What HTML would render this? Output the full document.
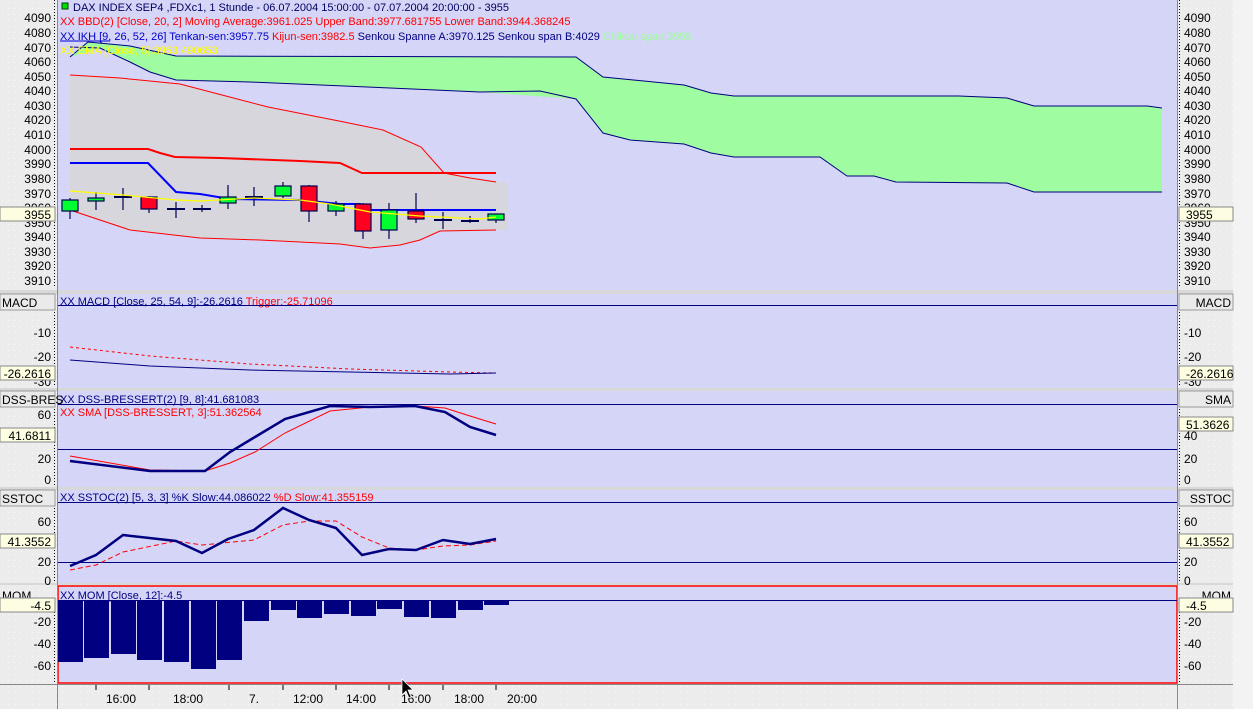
<!DOCTYPE html>
<html><head><meta charset="utf-8"><style>
html,body{margin:0;padding:0;background:#ececec;}
svg{display:block;font-family:"Liberation Sans",sans-serif;}
</style></head><body>
<svg width="1253" height="709" viewBox="0 0 1253 709" xmlns="http://www.w3.org/2000/svg">
<defs>
<pattern id="dots" width="8" height="8" patternUnits="userSpaceOnUse"><rect width="8" height="8" fill="#d5d5f7"/><rect x="3" y="3" width="1" height="1" fill="#e6e6fa"/></pattern>
<pattern id="gdots" width="6" height="6" patternUnits="userSpaceOnUse"><rect width="6" height="6" fill="#ececec"/><rect x="2" y="2" width="1" height="1" fill="#fafafa"/></pattern>
</defs>
<rect width="1253" height="709" fill="url(#gdots)"/>
<rect x="1233" y="0" width="20" height="709" fill="#f3f3f3"/>
<rect x="58" y="0" width="1119" height="290" fill="url(#dots)"/>
<rect x="58" y="294" width="1119" height="94" fill="url(#dots)"/>
<rect x="58" y="391" width="1119" height="96" fill="url(#dots)"/>
<rect x="58" y="490" width="1119" height="94" fill="url(#dots)"/>
<rect x="58" y="586" width="1119" height="97" fill="url(#dots)" stroke="#ff0000" stroke-width="1.5"/>
<g fill="#d8d8d8"><rect x="0" y="290" width="1233" height="4"/><rect x="0" y="388" width="1233" height="3"/><rect x="0" y="487" width="1233" height="3"/><rect x="0" y="583" width="1233" height="2"/></g>
<line x1="57.5" y1="0" x2="57.5" y2="709" stroke="#888"/>
<line x1="1177.5" y1="0" x2="1177.5" y2="709" stroke="#888"/>
<line x1="0" y1="684.5" x2="1233" y2="684.5" stroke="#888"/>
<g stroke="#000" stroke-dasharray="1,2"><line x1="54.5" y1="0" x2="54.5" y2="288"/><line x1="1179.5" y1="0" x2="1179.5" y2="288"/><line x1="54.5" y1="312" x2="54.5" y2="386"/><line x1="54.5" y1="409" x2="54.5" y2="486"/><line x1="54.5" y1="508" x2="54.5" y2="582"/><line x1="54.5" y1="600" x2="54.5" y2="682"/><line x1="1179.5" y1="312" x2="1179.5" y2="386"/><line x1="1179.5" y1="409" x2="1179.5" y2="486"/><line x1="1179.5" y1="508" x2="1179.5" y2="582"/><line x1="1179.5" y1="600" x2="1179.5" y2="682"/></g>

<polygon fill="#a0fca0" points="70,57 88,42 130,46 176,56 576,57 603,77 684,85 711,93 734,96 959,96 1007,98 1034,106 1147,106 1162,108 1162,192 1034,192 1007,183 896,182 874,176 847,176 820,157 734,157 711,153 684,144 630,140 603,133 576,99 480,92 390,88 250,82 176,80 150,72 130,62 100,48 70,57"/>
<polyline fill="none" stroke="#000080" stroke-width="1" points="70,57 88,42 130,46 176,56 576,57 603,77 684,85 711,93 734,96 959,96 1007,98 1034,106 1147,106 1162,108"/>
<polyline fill="none" stroke="#000080" stroke-width="1" points="70,47 100,48 130,62 150,72 176,80 250,82 390,88 480,92 540,91 576,99 603,133 630,140 684,144 711,153 734,157 820,157 847,176 874,176 896,182 1007,183 1034,192 1162,192"/>
<polygon fill="#d6d6dc" points="70,75 120,78 180,84 222,95 268,107 344,122 383,130 421,147 444,173 496,181 508,183 508,230 496,230 440,231 420,240 400,245 370,248 340,244 260,240 200,238 130,230 70,210"/>
<polyline fill="none" stroke="#ff0000" points="70,75 120,78 180,84 222,95 268,107 344,122 383,130 421,147 444,173 470,178 496,182"/>
<polyline fill="none" stroke="#ff0000" points="62,205 70,210 130,230 200,238 260,240 340,244 370,248 400,245 420,240 440,231 496,230"/>
<polyline fill="none" stroke="#ff0000" stroke-width="2" points="70,149 148,149 160,153 175,157 220,158 300,161 340,163 362,173 496,173"/>
<polyline fill="none" stroke="#0000ff" stroke-width="2" points="70,163 148,163 176,192 200,194 230,199 300,200 340,204 360,204 362,210 496,210"/>
<g stroke="#000050" stroke-width="1.2">
<line x1="70" y1="198" x2="70" y2="219"/><rect x="62" y="200" width="16" height="11" fill="#00ff30"/>
<line x1="96" y1="192" x2="96" y2="210"/><rect x="88" y="198" width="16" height="3" fill="#00ff30"/>
<line x1="123" y1="188" x2="123" y2="210"/><line x1="114" y1="197" x2="132" y2="197" stroke-width="2"/>
<line x1="149" y1="196" x2="149" y2="213"/><rect x="141" y="197" width="16" height="12" fill="#ff0020"/>
<line x1="176" y1="202" x2="176" y2="218"/><line x1="167" y1="209" x2="185" y2="209" stroke-width="2"/>
<line x1="202" y1="205" x2="202" y2="212"/><line x1="193" y1="209" x2="211" y2="209" stroke-width="2"/>
<line x1="228" y1="185" x2="228" y2="209"/><rect x="220" y="197" width="16" height="6" fill="#00ff30"/>
<line x1="254" y1="187" x2="254" y2="206"/><line x1="245" y1="197" x2="263" y2="197" stroke-width="2"/>
<line x1="283" y1="182" x2="283" y2="198"/><rect x="275" y="186" width="16" height="10" fill="#00ff30"/>
<line x1="309" y1="185" x2="309" y2="222"/><rect x="301" y="186" width="16" height="25" fill="#ff0020"/>
<line x1="336" y1="201" x2="336" y2="216"/><rect x="328" y="204" width="16" height="7" fill="#00ff30"/>
<line x1="363" y1="203" x2="363" y2="239"/><rect x="355" y="204" width="16" height="27" fill="#ff0020"/>
<line x1="389" y1="203" x2="389" y2="239"/><rect x="381" y="210" width="16" height="20" fill="#00ff30"/>
<line x1="416" y1="193" x2="416" y2="223"/><rect x="408" y="211" width="16" height="8" fill="#ff0020"/>
<line x1="443" y1="212" x2="443" y2="229"/><line x1="434" y1="220" x2="452" y2="220" stroke-width="2"/>
<line x1="470" y1="216" x2="470" y2="223"/><line x1="461" y1="221" x2="479" y2="221" stroke-width="2"/>
<line x1="496" y1="214" x2="496" y2="223"/><rect x="488" y="214" width="16" height="6" fill="#00ff30"/>
</g>
<polyline fill="none" stroke="#ffff00" stroke-width="1.2" points="70,191 123,195 176,200 200,201 254,198 300,200 330,204 370,212 420,216 480,219 496,217"/>

<g font-size="11">
<rect x="62" y="3" width="6" height="6" fill="#00e000" stroke="#004000"/>
<text x="73" y="11" fill="#000060">DAX INDEX SEP4  ,FDXc1, 1 Stunde - 06.07.2004 15:00:00 - 07.07.2004 20:00:00 - 3955</text>
<text x="60" y="25" fill="#ff0000">XX BBD(2) [Close, 20, 2] Moving Average:3961.025 Upper Band:3977.681755 Lower Band:3944.368245</text>
<text x="60" y="40" fill="#0000cc">XX IKH [9, 26, 52, 26] Tenkan-sen:3957.75 <tspan fill="#ff0000">Kijun-sen:3982.5</tspan> <tspan fill="#000080">Senkou Spanne A:3970.125 Senkou span B:4029</tspan> <tspan fill="#a0fca0">Chikou span:3955</tspan></text>
<text x="60" y="54" fill="#ffff00">XX EMA [Close, 5]:3953.490653</text>
<line x1="60" y1="41" x2="110" y2="41" stroke="#0000cc"/>
<text x="60" y="305" fill="#000080">XX MACD [Close, 25, 54, 9]:-26.2616 <tspan fill="#ff0000">Trigger:-25.71096</tspan></text>
<text x="60" y="403" fill="#000080">XX DSS-BRESSERT(2) [9, 8]:41.681083</text>
<text x="60" y="416" fill="#ff0000">XX SMA [DSS-BRESSERT, 3]:51.362564</text>
<text x="60" y="501" fill="#000080">XX SSTOC(2) [5, 3, 3] %K Slow:44.086022 <tspan fill="#ff0000">%D Slow:41.355159</tspan></text>
<text x="60" y="599" fill="#000080">XX MOM [Close, 12]:-4.5</text>
</g>
<g stroke="#000080"><line x1="58" y1="305.5" x2="1177" y2="305.5"/><line x1="58" y1="404.5" x2="1177" y2="404.5"/><line x1="58" y1="449.5" x2="1177" y2="449.5"/><line x1="58" y1="502.5" x2="1177" y2="502.5"/><line x1="58" y1="562.5" x2="1177" y2="562.5"/><line x1="58" y1="600.5" x2="1177" y2="600.5"/></g>

<polyline fill="none" stroke="#ff0000" stroke-dasharray="3,3" points="70,347 150,356 250,364 350,369 450,372 496,373"/>
<polyline fill="none" stroke="#000080" points="70,360 150,366 250,370 350,372 450,374 496,373"/>
<polyline fill="none" stroke="#ff0000" points="70,456 150,470 205,471 230,463 255,452 285,433 330,411 370,407 415,406 445,408 470,416 496,424"/>
<polyline fill="none" stroke="#000080" stroke-width="2.5" points="70,461 150,471 205,471 230,452 255,437 285,419 330,406 370,407 415,406 445,412 470,427 496,435"/>
<polyline fill="none" stroke="#ff0000" stroke-dasharray="5,3" points="70,570 96,565 123,552 176,541 202,545 254,540 283,525 309,521 336,521 362,537 389,548 416,550 443,546 470,545 496,541"/>
<polyline fill="none" stroke="#000080" stroke-width="2.5" points="70,566 96,555 123,535 176,541 202,553 228,539 254,530 283,508 309,520 336,528 362,555 389,549 416,550 443,540 470,544 496,539"/>
<g fill="#000080">
<rect x="58" y="601" width="25" height="61"/><rect x="84" y="601" width="25" height="57"/><rect x="111" y="601" width="25" height="53"/><rect x="137" y="601" width="25" height="59"/><rect x="164" y="601" width="25" height="61"/><rect x="191" y="601" width="25" height="68"/><rect x="217" y="601" width="25" height="59"/><rect x="244" y="601" width="25" height="20"/><rect x="271" y="601" width="25" height="9"/><rect x="297" y="601" width="25" height="17"/><rect x="324" y="601" width="25" height="13"/><rect x="351" y="601" width="25" height="15"/><rect x="377" y="601" width="25" height="8"/><rect x="404" y="601" width="25" height="16"/><rect x="431" y="601" width="25" height="17"/><rect x="458" y="601" width="25" height="9"/><rect x="484" y="601" width="25" height="4"/>
</g>

<g font-size="12" fill="#000" text-anchor="end">
<text x="51" y="22">4090</text><text x="51" y="37">4080</text><text x="51" y="52">4070</text><text x="51" y="66">4060</text><text x="51" y="81">4050</text><text x="51" y="95">4040</text><text x="51" y="110">4030</text><text x="51" y="124">4020</text><text x="51" y="139">4010</text><text x="51" y="154">4000</text><text x="51" y="168">3990</text><text x="51" y="183">3980</text><text x="51" y="198">3970</text><text x="51" y="212">3960</text><text x="51" y="227">3950</text><text x="51" y="241">3940</text><text x="51" y="256">3930</text><text x="51" y="270">3920</text><text x="51" y="285">3910</text>
<text x="51" y="337">-10</text><text x="51" y="361">-20</text><text x="51" y="386">-30</text>
<text x="51" y="419">60</text><text x="51" y="463">20</text><text x="51" y="484">0</text>
<text x="51" y="526">60</text><text x="51" y="566">20</text><text x="51" y="585">0</text>
<text x="51" y="626">-20</text><text x="51" y="648">-40</text><text x="51" y="670">-60</text>
</g>
<g font-size="12" fill="#000" text-anchor="start">
<text x="1184" y="22">4090</text><text x="1184" y="37">4080</text><text x="1184" y="52">4070</text><text x="1184" y="66">4060</text><text x="1184" y="81">4050</text><text x="1184" y="95">4040</text><text x="1184" y="110">4030</text><text x="1184" y="124">4020</text><text x="1184" y="139">4010</text><text x="1184" y="154">4000</text><text x="1184" y="168">3990</text><text x="1184" y="183">3980</text><text x="1184" y="198">3970</text><text x="1184" y="212">3960</text><text x="1184" y="227">3950</text><text x="1184" y="241">3940</text><text x="1184" y="256">3930</text><text x="1184" y="270">3920</text><text x="1184" y="285">3910</text>
<text x="1184" y="337">-10</text><text x="1184" y="361">-20</text><text x="1184" y="386">-30</text>
<text x="1184" y="440">40</text><text x="1184" y="463">20</text><text x="1184" y="484">0</text>
<text x="1184" y="526">60</text><text x="1184" y="566">20</text><text x="1184" y="585">0</text>
<text x="1184" y="626">-20</text><text x="1184" y="648">-40</text><text x="1184" y="670">-60</text>
</g>
<g font-size="12" fill="#000">
<rect x="0" y="294" width="55" height="16" fill="#eaeaea" stroke="#999"/><text x="2" y="307">MACD</text>
<rect x="0" y="391" width="55" height="16" fill="#eaeaea" stroke="#999"/><text x="2" y="404">DSS-BRES</text>
<rect x="0" y="490" width="55" height="16" fill="#eaeaea" stroke="#999"/><text x="2" y="503">SSTOC</text>
<text x="2" y="600">MOM</text>
<rect x="1179" y="294" width="54" height="16" fill="#eaeaea" stroke="#999"/><text x="1231" y="307" text-anchor="end">MACD</text>
<rect x="1179" y="391" width="54" height="16" fill="#eaeaea" stroke="#999"/><text x="1231" y="404" text-anchor="end">SMA</text>
<rect x="1179" y="490" width="54" height="16" fill="#eaeaea" stroke="#999"/><text x="1231" y="503" text-anchor="end">SSTOC</text>
<text x="1231" y="600" text-anchor="end">MOM</text>
</g>
<g font-size="12" fill="#000">
<rect x="0" y="207" width="55" height="14" fill="#fdfde2" stroke="#888"/><text x="51" y="219" text-anchor="end">3955</text>
<rect x="0" y="366" width="55" height="14" fill="#fdfde2" stroke="#888"/><text x="51" y="378" text-anchor="end">-26.2616</text>
<rect x="0" y="428" width="55" height="14" fill="#fdfde2" stroke="#888"/><text x="51" y="440" text-anchor="end">41.6811</text>
<rect x="0" y="534" width="55" height="14" fill="#fdfde2" stroke="#888"/><text x="51" y="546" text-anchor="end">41.3552</text>
<rect x="0" y="598" width="55" height="14" fill="#fdfde2" stroke="#888"/><text x="51" y="610" text-anchor="end">-4.5</text>
<rect x="1179" y="207" width="54" height="14" fill="#fdfde2" stroke="#888"/><text x="1186" y="219">3955</text>
<rect x="1179" y="366" width="54" height="14" fill="#fdfde2" stroke="#888"/><text x="1186" y="378">-26.2616</text>
<rect x="1179" y="417" width="54" height="14" fill="#fdfde2" stroke="#888"/><text x="1186" y="429">51.3626</text>
<rect x="1179" y="534" width="54" height="14" fill="#fdfde2" stroke="#888"/><text x="1186" y="546">41.3552</text>
<rect x="1179" y="598" width="54" height="14" fill="#fdfde2" stroke="#888"/><text x="1186" y="610">-4.5</text>
</g>
<g stroke="#000"><line x1="96" y1="685" x2="96" y2="690"/><line x1="149" y1="685" x2="149" y2="690"/><line x1="229" y1="685" x2="229" y2="690"/><line x1="283" y1="685" x2="283" y2="690"/><line x1="336" y1="685" x2="336" y2="690"/><line x1="389" y1="685" x2="389" y2="690"/><line x1="443" y1="685" x2="443" y2="690"/><line x1="496" y1="685" x2="496" y2="690"/></g>
<g font-size="12" fill="#000" text-anchor="middle">
<text x="121" y="703">16:00</text><text x="188" y="703">18:00</text><text x="254" y="703">7.</text><text x="308" y="703">12:00</text><text x="361" y="703">14:00</text><text x="416" y="703">16:00</text><text x="469" y="703">18:00</text><text x="522" y="703">20:00</text>
</g>
<path d="M402,679 L402,695 L406,691 L409,698 L411,697 L408,690 L413,690 Z" fill="#000" stroke="#fff" stroke-width="0.7"/>
</svg>
</body></html>
